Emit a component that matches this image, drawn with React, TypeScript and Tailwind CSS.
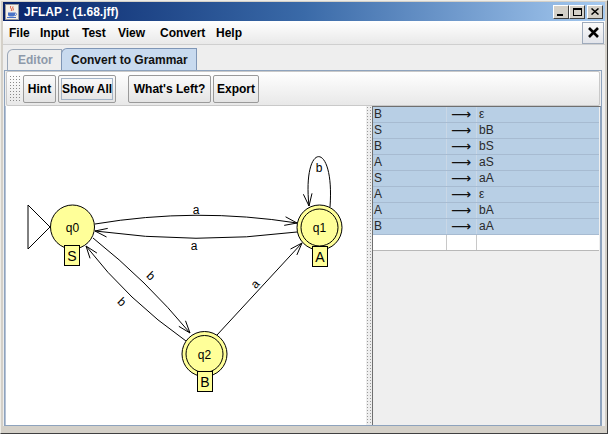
import React from 'react';

const rules: [string, string][] = [
  ['B', 'ε'],
  ['S', 'bB'],
  ['B', 'bS'],
  ['A', 'aS'],
  ['S', 'aA'],
  ['A', 'ε'],
  ['A', 'bA'],
  ['B', 'aA'],
];

// open V arrowhead at (x,y), pointing away from (fx,fy)
const arrowHead = (x: number, y: number, fx: number, fy: number) => {
  const a = Math.atan2(y - fy, x - fx);
  const len = 13;
  const s = 0.34;
  const x1 = x - len * Math.cos(a - s);
  const y1 = y - len * Math.sin(a - s);
  const x2 = x - len * Math.cos(a + s);
  const y2 = y - len * Math.sin(a + s);
  return `M ${x1} ${y1} L ${x} ${y} L ${x2} ${y2}`;
};

const edges = [
  { d: 'M 95 224 Q 196 207 297 223', tip: [297, 223, 196, 207] },
  { d: 'M 297 232 Q 196 245 95 231', tip: [95, 231, 196, 245] },
  { d: 'M 330 207 C 335 140 302 140 309 206', tip: [309, 206, 303, 150] },
  { d: 'M 217 335 L 302 243', tip: [302, 243, 217, 335] },
  { d: 'M 93 238 Q 146.5 280.5 190 333', tip: [190, 333, 146.5, 280.5] },
  { d: 'M 186 341 Q 128 300.5 86 246', tip: [86, 246, 128, 300.5] },
];

const labels = [
  { t: 'a', x: 196, y: 214, r: 0 },
  { t: 'a', x: 194, y: 250, r: 0 },
  { t: 'b', x: 319, y: 172, r: 0 },
  { t: 'a', x: 255, y: 288, r: -47 },
  { t: 'b', x: 151, y: 280, r: 44 },
  { t: 'b', x: 122, y: 306, r: 44 },
];

const YELLOW = '#ffff99';
const FONT = 'Liberation Sans, Arial, sans-serif';

function Graph() {
  return (
    <svg width="360" height="319" viewBox="6 106 360 319" className="block">
      {/* start arrow */}
      <polygon points="28,205 50,227 28,249" fill="white" stroke="black" />

      {edges.map((e, i) => (
        <g key={i} fill="none" stroke="black" strokeWidth="1">
          <path d={e.d} />
          <path d={arrowHead(e.tip[0], e.tip[1], e.tip[2], e.tip[3])} />
        </g>
      ))}

      {labels.map((l, i) => (
        <text
          key={i}
          x={l.x}
          y={l.y}
          textAnchor="middle"
          fontSize="12"
          fontFamily={FONT}
          transform={l.r ? `rotate(${l.r} ${l.x} ${l.y - 4})` : undefined}
        >
          {l.t}
        </text>
      ))}

      {/* q0 */}
      <circle cx="72.5" cy="227" r="22" fill={YELLOW} stroke="black" />
      <text x="72.5" y="231.5" textAnchor="middle" fontSize="12" fontFamily={FONT}>q0</text>
      <rect x="64.5" y="245.5" width="15" height="20" fill={YELLOW} stroke="black" />
      <text x="72" y="261" textAnchor="middle" fontSize="14" fontFamily={FONT}>S</text>

      {/* q1 */}
      <circle cx="319.5" cy="227.5" r="22.5" fill={YELLOW} stroke="black" />
      <circle cx="319.5" cy="227.5" r="18.5" fill={YELLOW} stroke="black" />
      <text x="319.5" y="232" textAnchor="middle" fontSize="12" fontFamily={FONT}>q1</text>
      <rect x="312.5" y="246.5" width="15" height="20" fill={YELLOW} stroke="black" />
      <text x="320" y="262" textAnchor="middle" fontSize="14" fontFamily={FONT}>A</text>

      {/* q2 */}
      <circle cx="204.5" cy="354" r="22.5" fill={YELLOW} stroke="black" />
      <circle cx="204.5" cy="354" r="18.5" fill={YELLOW} stroke="black" />
      <text x="204.5" y="358.5" textAnchor="middle" fontSize="12" fontFamily={FONT}>q2</text>
      <rect x="197.5" y="371.5" width="15" height="20" fill={YELLOW} stroke="black" />
      <text x="205" y="387" textAnchor="middle" fontSize="14" fontFamily={FONT}>B</text>
    </svg>
  );
}

function JavaIcon() {
  return (
    <svg width="14" height="16" viewBox="0 0 14 16">
      <rect x="0.5" y="0.5" width="13" height="15" fill="#f4f0e8" stroke="#9a9a9a" />
      <path d="M6 2 C 4 4, 8 5, 6 7 M8 2.5 C 7 4, 9 5, 8 6.5" stroke="#e0401c" fill="none" strokeWidth="1" />
      <path d="M3 8.5 H10 V11 C10 13, 3 13, 3 11 Z" fill="#4a74c8" />
      <path d="M10 9 C12 9, 12 11.5, 10 11.5" stroke="#4a74c8" fill="none" />
      <path d="M2 13.5 H11" stroke="#4a74c8" />
    </svg>
  );
}

function WinButton({ children, className = '' }: { children: React.ReactNode; className?: string }) {
  return (
    <div
      className={`w-[16px] h-[14px] bg-[#d4d0c8] border border-t-white border-l-white border-r-[#404040] border-b-[#404040] flex items-center justify-center ${className}`}
    >
      {children}
    </div>
  );
}

function ToolButton({ label, w, focused = false }: { label: string; w: string; focused?: boolean }) {
  return (
    <div
      className={`${w} h-[28px] border border-[#9a9a9a] rounded-[2px] bg-linear-to-b from-[#fbfbfb] to-[#e4e4e4] flex items-center justify-center p-[2px]`}
    >
      <div
        className={`w-full h-full flex items-center justify-center ${focused ? 'border border-[#a3b4c8]' : ''}`}
      >
        <span className="text-[12px] font-bold text-black leading-none whitespace-nowrap">{label}</span>
      </div>
    </div>
  );
}

export default function App() {
  return (
    <div className="w-[608px] h-[434px] overflow-hidden bg-[#d4d0c8] border border-t-[#eeede8] border-l-[#eeede8] border-r-[#404040] border-b-[#404040] pt-[1px] px-[2px] pb-[7px] font-['Liberation_Sans',Arial,sans-serif] flex flex-col">
      {/* title bar */}
      <div className="h-[19px] shrink-0 bg-linear-to-r from-[#0a246a] via-[#3a6aa8] to-[#a6caf0] flex items-center pl-[2px] pr-[2px]">
        <JavaIcon />
        <span className="ml-[5px] text-white font-bold text-[12px] leading-none">JFLAP : (1.68.jff)</span>
        <div className="ml-auto flex items-center">
          <WinButton>
            <div className="w-[6px] h-[2px] bg-black mt-[6px] -ml-[2px]" />
          </WinButton>
          <WinButton>
            <div className="w-[9px] h-[8px] border border-black border-t-2" />
          </WinButton>
          <WinButton className="ml-[2px]">
            <svg width="8" height="7" viewBox="0 0 8 7">
              <path d="M0.5 0.5 L7.5 6.5 M7.5 0.5 L0.5 6.5" stroke="black" strokeWidth="1.5" />
            </svg>
          </WinButton>
        </div>
      </div>

      {/* menu bar */}
      <div className="h-[24px] shrink-0 bg-linear-to-b from-white to-[#e9e9e9] border-b border-[#cfcfcf] flex items-center pl-[6px] pr-[1px]">
        {[
          ['File', 'w-[31px]'],
          ['Input', 'w-[42px]'],
          ['Test', 'w-[36px]'],
          ['View', 'w-[42px]'],
          ['Convert', 'w-[56px]'],
          ['Help', 'w-[40px]'],
        ].map(([m, w]) => (
          <span key={m} className={`${w} text-[12px] font-bold text-black leading-none`}>
            {m}
          </span>
        ))}
        <div className="ml-auto w-[22px] h-[22px] border border-[#9eaabb] bg-linear-to-b from-[#fafafa] to-[#e2e4ea] flex items-center justify-center">
          <svg width="11" height="11" viewBox="0 0 11 11">
            <path d="M1 1 L10 10 M10 1 L1 10" stroke="black" strokeWidth="2.6" />
          </svg>
        </div>
      </div>

      {/* tabs + content */}
      <div className="flex-1 bg-[#eeeeee] flex flex-col pr-[3px]">
        <div className="h-[25px] shrink-0 flex items-end pl-[4px]">
          <div className="w-[55px] h-[21px] border border-b-0 border-[#9aa7b8] rounded-tl-[6px] bg-[#eeeeee] flex items-center pl-[10px]">
            <span className="text-[12px] font-bold text-[#8d99aa] leading-none">Editor</span>
          </div>
          <div className="w-[136px] h-[22px] border border-b-0 border-[#7f96b6] rounded-tl-[6px] bg-[#c8daef] flex items-center pl-[9px] -ml-[1px]">
            <span className="text-[12px] font-bold text-[#111] leading-none">Convert to Grammar</span>
          </div>
        </div>

        <div className="flex-1 ml-[1px] border border-[#8ea3bd] flex flex-col">
          {/* toolbar */}
          <div className="h-[35px] shrink-0 mx-[1px] border border-[#c9c9c9] rounded-[2px] bg-linear-to-b from-white to-[#e8e8e8] flex items-center pl-[2px]">
            <div className="w-[12px] h-[28px] bg-[radial-gradient(circle,#8a8a8a_0.7px,transparent_1px)] bg-[length:3px_3px]" />
            <div className="ml-[2px] flex items-center gap-[2px]">
              <ToolButton label="Hint" w="w-[33px]" />
              <ToolButton label="Show All" w="w-[58px]" focused />
            </div>
            <div className="ml-[12px] flex items-center gap-[2px]">
              <ToolButton label="What's Left?" w="w-[83px]" />
              <ToolButton label="Export" w="w-[46px]" />
            </div>
          </div>

          {/* split pane */}
          <div className="flex-1 flex min-h-0">
            <div className="w-[361px] shrink-0 border-l border-[#b4c2d6] bg-white overflow-hidden">
              <Graph />
            </div>
            <div className="w-[6px] shrink-0 bg-[#eeeeee] bg-[radial-gradient(circle,#9a9a9a_0.7px,transparent_1px)] bg-[length:3px_3px]" />
            <div className="flex-1 border-l border-t border-[#6f6f6f] border-r border-r-[#8ea3bd] bg-[#efefef] pr-[1px]">
              <div className="flex flex-col">
                {rules.map(([l, r], i) => (
                  <div key={i} className="h-[16px] flex bg-[#b8cfe5] border-b border-[#a7bbd1] text-[12px] text-[#2a2a2a] leading-[15px]">
                    <div className="w-[74px] pl-[1px] border-r border-[#c9d7e6]">{l}</div>
                    <div className="w-[30px] pl-[4px] border-r border-[#c9d7e6] overflow-hidden whitespace-nowrap font-['DejaVu_Sans',sans-serif] text-[14px] leading-[14px] text-[#111]">⟶</div>
                    <div className="flex-1 pl-[2px]">{r}</div>
                  </div>
                ))}
                <div className="h-[16px] flex bg-white border-b border-[#b8b8b8]">
                  <div className="w-[74px] border-r border-[#c8c8c8]" />
                  <div className="w-[30px] border-r border-[#c8c8c8]" />
                  <div className="flex-1" />
                </div>
              </div>
            </div>
          </div>
        </div>
      </div>
    </div>
  );
}
